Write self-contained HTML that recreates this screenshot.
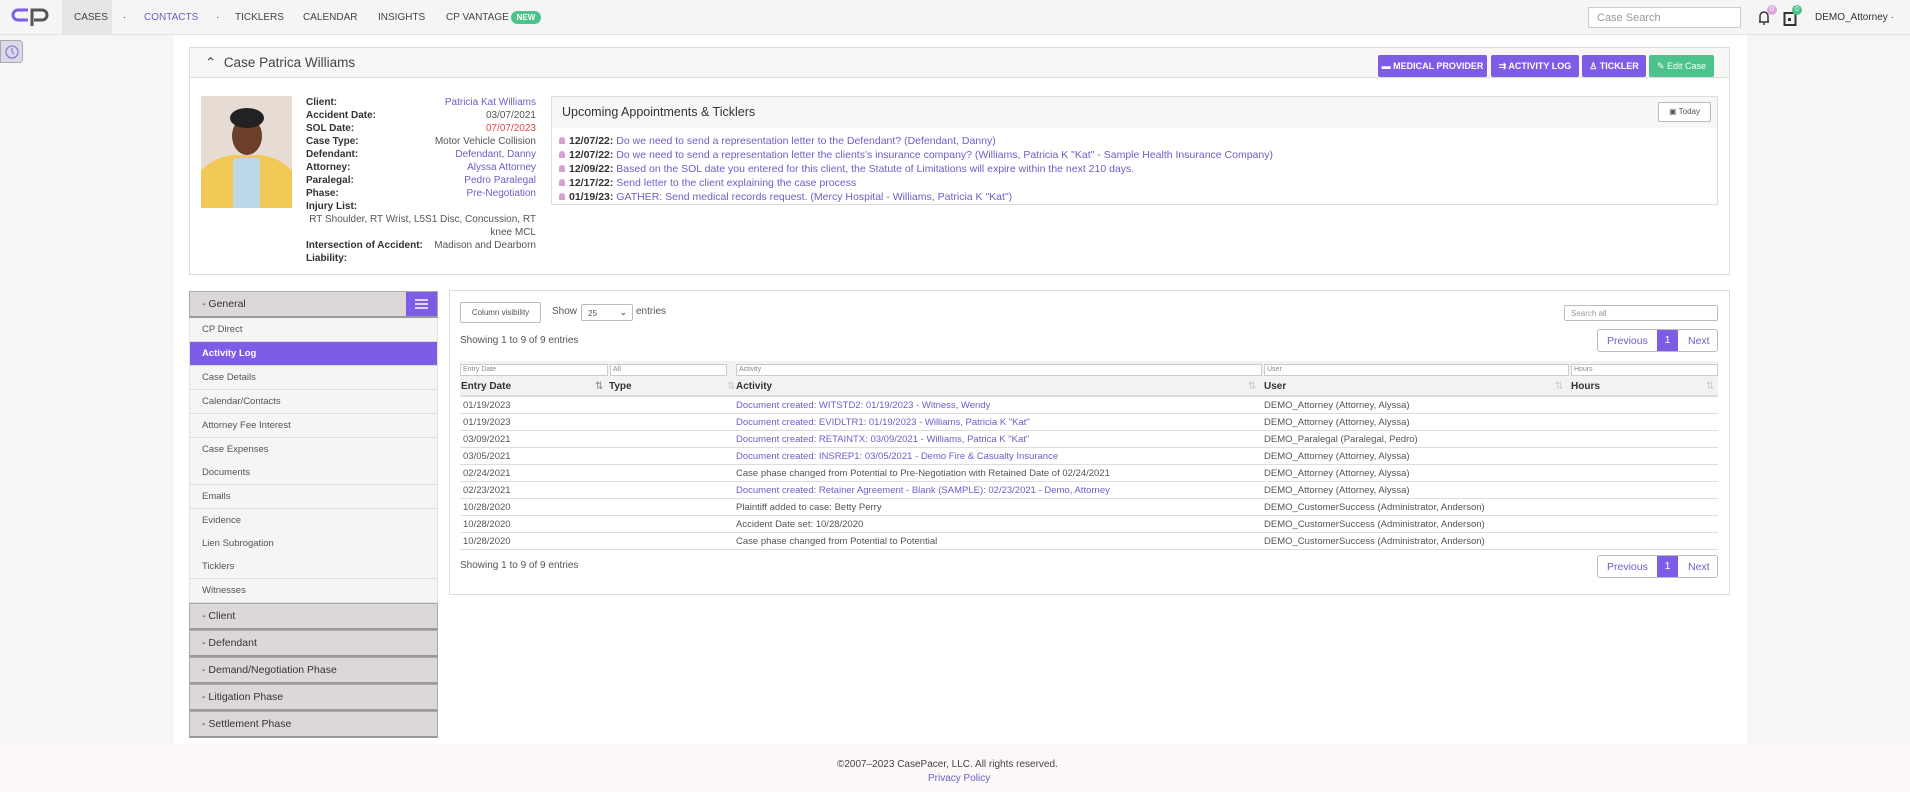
<!DOCTYPE html>
<html><head><meta charset="utf-8"><style>
*{box-sizing:border-box;margin:0;padding:0}
body{width:1910px;height:792px;overflow:hidden;background:#f8f6f5;font-family:"Liberation Sans",sans-serif;font-size:10px;color:#555;position:relative}
.a{position:absolute;white-space:nowrap}
.nav{position:absolute;left:0;top:0;width:1910px;height:35px;background:#f5f5f5;border-bottom:1px solid #e4e4e4}
.nv{position:absolute;top:12px;font-size:10px;color:#444}
.p{color:#6b5fc7}
.btn{position:absolute;top:55px;height:22px;background:#7d5ce6;color:#fff;font-weight:bold;font-size:9px;line-height:22px;text-align:center;border-radius:2px}
.lbl{position:absolute;left:306px;font-weight:bold;color:#333;font-size:10px}
.val{position:absolute;right:1374px;font-size:10px;text-align:right}
.tk{position:absolute;left:559px;font-size:10.5px}
.tk b{color:#333}
.tk i{display:inline-block;width:6px;height:7px;background:#d8a0d0;border-radius:3px 3px 0 0;margin-right:4px}
.si{position:absolute;left:189px;width:249px;height:24px;background:#f5f5f5;border-bottom:1px solid #ddd;border-left:1px solid #e4e4e4;border-right:1px solid #e4e4e4;padding-left:12px;line-height:23px;font-size:9.5px;color:#555}
.gh{position:absolute;left:189px;width:249px;height:27px;background:#dcd8d8;border:1px solid #aaa;border-bottom:2px solid #999;padding-left:12px;line-height:24px;font-size:10.5px;color:#333}
.fi{position:absolute;top:364px;height:12px;border:1px solid #ccc;background:#fff;font-size:7px;color:#888;padding-left:2px;line-height:10px}
.th{position:absolute;top:381px;font-weight:bold;font-size:10px;color:#333}
.row{position:absolute;left:460px;width:1258px;height:17px;border-bottom:1px solid #ddd}
.row span{position:absolute;top:3px;font-size:9.5px;white-space:nowrap}
.pg{position:absolute;left:1597px;width:121px;height:23px;border:1px solid #bbb;border-radius:3px;font-size:10.5px;color:#6b5fc7}
</style></head><body>
<div class="nav">
<svg class="a" style="left:10px;top:6px" width="42" height="22" viewBox="0 0 42 22"><path d="M18 4H8a5 5 0 0 0 0 10h10" fill="none" stroke="#7d5ce6" stroke-width="3"/><path d="M22 20V4h10a5 5 0 0 1 0 10H24" fill="none" stroke="#555" stroke-width="3"/></svg>
<div class="a" style="left:62px;top:0;width:50px;height:35px;background:#e6e6e6"></div>
<div class="nv" style="left:74px">CASES</div><div class="nv" style="left:123px">·</div>
<div class="nv p" style="left:144px">CONTACTS</div><div class="nv" style="left:216px">·</div>
<div class="nv" style="left:235px">TICKLERS</div><div class="nv" style="left:303px">CALENDAR</div>
<div class="nv" style="left:378px">INSIGHTS</div><div class="nv" style="left:446px">CP VANTAGE</div>
<div class="a" style="left:511px;top:11px;width:30px;height:13px;background:#4cc38a;color:#fff;border-radius:7px;font-size:8px;font-weight:bold;text-align:center;line-height:13px">NEW</div>
<div class="a" style="left:1588px;top:7px;width:153px;height:21px;border:1px solid #ccc;background:#fff;color:#999;font-size:11px;padding:4px 8px">Case Search</div>
<svg class="a" style="left:1757px;top:9px" width="14" height="18" viewBox="0 0 14 18"><path d="M3 13V7a4 4 0 0 1 8 0v6H2h10M6 15h2" fill="none" stroke="#333" stroke-width="1.5"/></svg>
<div class="a" style="left:1767px;top:5px;width:10px;height:10px;border-radius:5px;background:#e0a8d8;color:#fff;font-size:7px;text-align:center;line-height:10px">0</div>
<svg class="a" style="left:1783px;top:10px" width="14" height="16"><rect x="1.5" y="3" width="11" height="12" fill="none" stroke="#333" stroke-width="2"/><rect x="5" y="8" width="3" height="3" fill="#333"/></svg>
<div class="a" style="left:1792px;top:5px;width:10px;height:10px;border-radius:5px;background:#4cc38a;color:#fff;font-size:7px;text-align:center;line-height:10px">0</div>
<div class="nv" style="left:1815px;color:#333">DEMO_Attorney ·</div>
</div>
<div class="a" style="left:0;top:40px;width:23px;height:23px;background:#dcd8e8;border:1px solid #aaa;border-radius:0 4px 4px 0"><svg width="20" height="20" style="margin:1px"><circle cx="10" cy="10" r="6" fill="none" stroke="#8a7fd0" stroke-width="1.3"/><path d="M10 6v4l2 2" fill="none" stroke="#8a7fd0" stroke-width="1.2"/></svg></div>
<div class="a" style="left:174px;top:35px;width:1573px;height:709px;background:#fff"></div>
<div class="a" style="left:0;top:744px;width:1910px;height:48px;background:#fbf8f7"></div>
<div class="a" style="left:837px;top:759px;font-size:10px;color:#444">©2007–2023 CasePacer, LLC. All rights reserved.</div>
<div class="a p" style="left:928px;top:773px;font-size:10px">Privacy Policy</div>

<div class="a" style="left:189px;top:47px;width:1541px;height:228px;border:1px solid #ddd"></div>
<div class="a" style="left:190px;top:48px;width:1539px;height:30px;background:#f9f7f6;border-bottom:1px solid #ddd"></div>
<div class="a" style="left:205px;top:55px;font-size:13.5px;color:#444">⌃&nbsp; Case Patrica Williams</div>
<div class="btn" style="left:1378px;width:109px">▬ MEDICAL PROVIDER</div>
<div class="btn" style="left:1491px;width:88px">⇉ ACTIVITY LOG</div>
<div class="btn" style="left:1582px;width:64px">♙ TICKLER</div>
<div class="btn" style="left:1649px;width:65px;background:#4cc38a;font-weight:normal">✎ Edit Case</div>
<svg class="a" style="left:201px;top:96px" width="91" height="112"><rect width="91" height="112" fill="#e6dcd4"/><path d="M0 112V75q10-12 30-16h30q22 4 31 16v37z" fill="#f2c957"/><path d="M32 112V62h27v50z" fill="#bcd8e8"/><ellipse cx="46" cy="40" rx="15" ry="19" fill="#6b3f2a"/><ellipse cx="46" cy="22" rx="17" ry="10" fill="#222"/></svg>
<div class="lbl" style="top:97px">Client:</div><div class="val p" style="top:97px">Patricia Kat Williams</div>
<div class="lbl" style="top:110px">Accident Date:</div><div class="val" style="top:110px">03/07/2021</div>
<div class="lbl" style="top:123px">SOL Date:</div><div class="val" style="top:123px;color:#e0454f">07/07/2023</div>
<div class="lbl" style="top:136px">Case Type:</div><div class="val" style="top:136px">Motor Vehicle Collision</div>
<div class="lbl" style="top:149px">Defendant:</div><div class="val p" style="top:149px">Defendant, Danny</div>
<div class="lbl" style="top:162px">Attorney:</div><div class="val p" style="top:162px">Alyssa Attorney</div>
<div class="lbl" style="top:175px">Paralegal:</div><div class="val p" style="top:175px">Pedro Paralegal</div>
<div class="lbl" style="top:188px">Phase:</div><div class="val p" style="top:188px">Pre-Negotiation</div>
<div class="lbl" style="top:201px">Injury List:</div>
<div class="val" style="top:214px">RT Shoulder, RT Wrist, L5S1 Disc, Concussion, RT</div>
<div class="val" style="top:227px">knee MCL</div>
<div class="lbl" style="top:240px">Intersection of Accident:</div><div class="val" style="top:240px">Madison and Dearborn</div>
<div class="lbl" style="top:253px">Liability:</div>

<div class="a" style="left:551px;top:96px;width:1167px;height:109px;border:1px solid #ddd"></div>
<div class="a" style="left:552px;top:97px;width:1165px;height:31px;background:#f9f7f6"></div>
<div class="a" style="left:562px;top:105px;font-size:12.5px;color:#333">Upcoming Appointments &amp; Ticklers</div>
<div class="a" style="left:1658px;top:102px;width:53px;height:20px;border:1px solid #bbb;background:#fff;font-size:8px;text-align:center;line-height:18px;border-radius:2px">▣ Today</div>
<div class="tk" style="top:135px"><i></i><b>12/07/22:</b> <span class="p">Do we need to send a representation letter to the Defendant? (Defendant, Danny)</span></div>
<div class="tk" style="top:149px"><i></i><b>12/07/22:</b> <span class="p">Do we need to send a representation letter the clients's insurance company? (Williams, Patricia K "Kat" - Sample Health Insurance Company)</span></div>
<div class="tk" style="top:163px"><i></i><b>12/09/22:</b> <span class="p">Based on the SOL date you entered for this client, the Statute of Limitations will expire within the next 210 days.</span></div>
<div class="tk" style="top:177px"><i></i><b>12/17/22:</b> <span class="p">Send letter to the client explaining the case process</span></div>
<div class="tk" style="top:191px"><i></i><b>01/19/23:</b> <span class="p">GATHER: Send medical records request. (Mercy Hospital - Williams, Patricia K "Kat")</span></div>

<div class="gh" style="top:291px">- General</div>
<div class="a" style="left:406px;top:292px;width:31px;height:24px;background:#7d5ce6"><svg width="31" height="24"><path d="M9 8h13M9 12h13M9 16h13" stroke="#fff" stroke-width="1.5"/></svg></div>
<div class="si" style="top:318px">CP Direct</div>
<div class="si" style="top:342px;background:#7d5ce6;color:#fff;font-weight:bold">Activity Log</div>
<div class="si" style="top:366px">Case Details</div>
<div class="si" style="top:390px">Calendar/Contacts</div>
<div class="si" style="top:414px">Attorney Fee Interest</div>
<div class="si" style="top:438px">Case Expenses</div>
<div class="si" style="top:461px">Documents</div>
<div class="si" style="top:485px">Emails</div>
<div class="si" style="top:509px">Evidence</div>
<div class="si" style="top:532px">Lien Subrogation</div>
<div class="si" style="top:555px">Ticklers</div>
<div class="si" style="top:579px">Witnesses</div>
<div class="gh" style="top:603px">- Client</div>
<div class="gh" style="top:630px">- Defendant</div>
<div class="gh" style="top:657px">- Demand/Negotiation Phase</div>
<div class="gh" style="top:684px">- Litigation Phase</div>
<div class="gh" style="top:711px">- Settlement Phase</div>

<div class="a" style="left:449px;top:290px;width:1281px;height:305px;border:1px solid #ddd"></div>
<div class="a" style="left:460px;top:302px;width:81px;height:21px;border:1px solid #bbb;font-size:8px;text-align:center;line-height:19px;border-radius:2px">Column visibility</div>
<div class="a" style="left:552px;top:306px;font-size:10px">Show</div>
<div class="a" style="left:581px;top:304px;width:52px;height:17px;border:1px solid #bbb;border-radius:2px;font-size:8px;padding:4px 6px">25 <span style="position:absolute;right:5px;top:2px;font-size:9px;color:#333">⌄</span></div>
<div class="a" style="left:636px;top:306px;font-size:10px">entries</div>
<div class="a" style="left:1564px;top:305px;width:154px;height:16px;border:1px solid #bbb;font-size:8px;color:#999;padding:3px 6px;border-radius:2px">Search all</div>
<div class="a" style="left:460px;top:335px;font-size:10px">Showing 1 to 9 of 9 entries</div>
<div class="pg" style="top:329px"><span class="a" style="left:9px;top:5px">Previous</span><div class="a" style="left:59px;top:0;width:21px;height:21px;background:#7d5ce6;color:#fff;text-align:center;line-height:21px">1</div><span class="a" style="left:90px;top:5px">Next</span></div>
<div class="a" style="left:460px;top:361px;width:1258px;height:36px;background:#f3f2f2"></div>
<div class="fi" style="left:460px;width:148px">Entry Date</div>
<div class="fi" style="left:610px;width:117px">All</div>
<div class="fi" style="left:736px;width:526px">Activity</div>
<div class="fi" style="left:1264px;width:305px">User</div>
<div class="fi" style="left:1571px;width:147px">Hours</div>
<div class="a" style="left:460px;top:395px;width:1258px;height:2px;background:#ddd"></div>
<div class="th" style="left:461px">Entry Date</div><div class="a" style="left:595px;top:381px;color:#888">⇅</div>
<div class="th" style="left:609px">Type</div><div class="a" style="left:727px;top:381px;color:#ccc">⇅</div>
<div class="th" style="left:736px">Activity</div><div class="a" style="left:1248px;top:381px;color:#ccc">⇅</div>
<div class="th" style="left:1264px">User</div><div class="a" style="left:1555px;top:381px;color:#ccc">⇅</div>
<div class="th" style="left:1571px">Hours</div><div class="a" style="left:1706px;top:381px;color:#ccc">⇅</div>

<div class="row" style="top:397px"><span style="left:3px">01/19/2023</span><span class="p" style="left:276px">Document created: WITSTD2: 01/19/2023 - Witness, Wendy</span><span style="left:804px">DEMO_Attorney (Attorney, Alyssa)</span></div>
<div class="row" style="top:414px"><span style="left:3px">01/19/2023</span><span class="p" style="left:276px">Document created: EVIDLTR1: 01/19/2023 - Williams, Patricia K "Kat"</span><span style="left:804px">DEMO_Attorney (Attorney, Alyssa)</span></div>
<div class="row" style="top:431px"><span style="left:3px">03/09/2021</span><span class="p" style="left:276px">Document created: RETAINTX: 03/09/2021 - Williams, Patrica K "Kat"</span><span style="left:804px">DEMO_Paralegal (Paralegal, Pedro)</span></div>
<div class="row" style="top:448px"><span style="left:3px">03/05/2021</span><span class="p" style="left:276px">Document created: INSREP1: 03/05/2021 - Demo Fire &amp; Casualty Insurance</span><span style="left:804px">DEMO_Attorney (Attorney, Alyssa)</span></div>
<div class="row" style="top:465px"><span style="left:3px">02/24/2021</span><span style="left:276px">Case phase changed from Potential to Pre-Negotiation with Retained Date of 02/24/2021</span><span style="left:804px">DEMO_Attorney (Attorney, Alyssa)</span></div>
<div class="row" style="top:482px"><span style="left:3px">02/23/2021</span><span class="p" style="left:276px">Document created: Retainer Agreement - Blank (SAMPLE): 02/23/2021 - Demo, Attorney</span><span style="left:804px">DEMO_Attorney (Attorney, Alyssa)</span></div>
<div class="row" style="top:499px"><span style="left:3px">10/28/2020</span><span style="left:276px">Plaintiff added to case: Betty Perry</span><span style="left:804px">DEMO_CustomerSuccess (Administrator, Anderson)</span></div>
<div class="row" style="top:516px"><span style="left:3px">10/28/2020</span><span style="left:276px">Accident Date set: 10/28/2020</span><span style="left:804px">DEMO_CustomerSuccess (Administrator, Anderson)</span></div>
<div class="row" style="top:533px"><span style="left:3px">10/28/2020</span><span style="left:276px">Case phase changed from Potential to Potential</span><span style="left:804px">DEMO_CustomerSuccess (Administrator, Anderson)</span></div>
<div class="a" style="left:460px;top:560px;font-size:10px">Showing 1 to 9 of 9 entries</div>
<div class="pg" style="top:555px"><span class="a" style="left:9px;top:5px">Previous</span><div class="a" style="left:59px;top:0;width:21px;height:21px;background:#7d5ce6;color:#fff;text-align:center;line-height:21px">1</div><span class="a" style="left:90px;top:5px">Next</span></div>
</body></html>
